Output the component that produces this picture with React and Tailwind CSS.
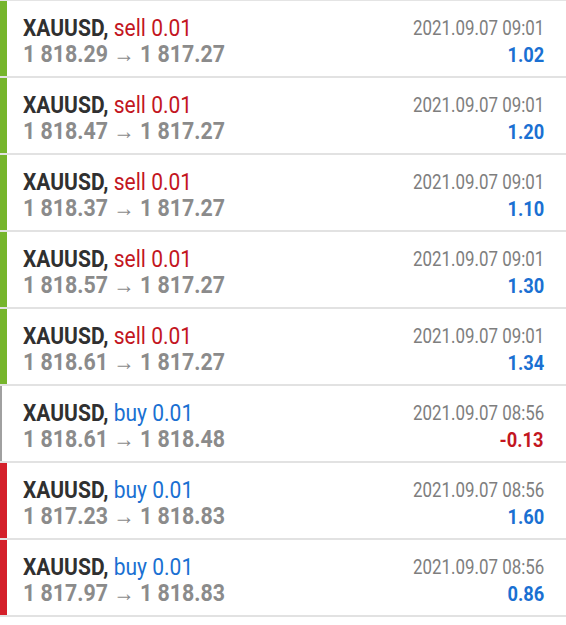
import React from "react";

const rows = [
  { side: "sell", open: "1 818.29", close: "1 817.27", time: "2021.09.07 09:01", profit: "1.02", bar: "green" },
  { side: "sell", open: "1 818.47", close: "1 817.27", time: "2021.09.07 09:01", profit: "1.20", bar: "green" },
  { side: "sell", open: "1 818.37", close: "1 817.27", time: "2021.09.07 09:01", profit: "1.10", bar: "green" },
  { side: "sell", open: "1 818.57", close: "1 817.27", time: "2021.09.07 09:01", profit: "1.30", bar: "green" },
  { side: "sell", open: "1 818.61", close: "1 817.27", time: "2021.09.07 09:01", profit: "1.34", bar: "green" },
  { side: "buy", open: "1 818.61", close: "1 818.48", time: "2021.09.07 08:56", profit: "-0.13", bar: "gray" },
  { side: "buy", open: "1 817.23", close: "1 818.83", time: "2021.09.07 08:56", profit: "1.60", bar: "red" },
  { side: "buy", open: "1 817.97", close: "1 818.83", time: "2021.09.07 08:56", profit: "0.86", bar: "red" },
];

function Bar({ kind }) {
  if (kind === "green") return <div className="w-[7px] shrink-0 bg-[#76b52c]" />;
  if (kind === "red") return <div className="w-[7px] shrink-0 bg-[#d4202a]" />;
  return (
    <div className="w-[7px] shrink-0 flex">
      <div className="w-[2px] bg-[#a0a0a0]" />
    </div>
  );
}

export default function App() {
  return (
    <div
      className="w-[566px] h-[625px] bg-white overflow-hidden border-t border-[#e4e4e4]"
      style={{ fontFamily: "Roboto, 'Noto Sans', sans-serif" }}
    >
      {rows.map((r, i) => (
        <div key={i} className="flex h-[77px] border-b-2 border-[#e2e2e2]">
          <Bar kind={r.bar} />
          <div className="flex-1 flex justify-between pl-[16px] pr-[22px] pt-[14px]">
            <div className="flex flex-col items-start">
              <div className="text-[24px] leading-[26px] whitespace-nowrap inline-block origin-left scale-x-[0.875]">
                <span className="font-bold text-[#303030]">XAUUSD, </span>
                <span className={r.side === "sell" ? "text-[#c3161f]" : "text-[#1a70d2]"}>
                  {r.side} 0.01
                </span>
              </div>
              <div className="text-[24px] leading-[26px] font-bold text-[#8b8b8b] whitespace-nowrap inline-block origin-left scale-x-[0.89]">
                {r.open} <span className="font-medium">→</span> {r.close}
              </div>
            </div>
            <div className="flex flex-col items-end">
              <div className="text-[20px] leading-[26px] text-[#7e7e7e] whitespace-nowrap inline-block origin-right scale-x-[0.845]">
                {r.time}
              </div>
              <div
                className={
                  "text-[21px] leading-[26px] mt-[1px] font-bold whitespace-nowrap inline-block origin-right scale-x-[0.87] " +
                  (r.profit.startsWith("-") ? "text-[#c3161f]" : "text-[#1a70d2]")
                }
              >
                {r.profit}
              </div>
            </div>
          </div>
        </div>
      ))}
    </div>
  );
}
